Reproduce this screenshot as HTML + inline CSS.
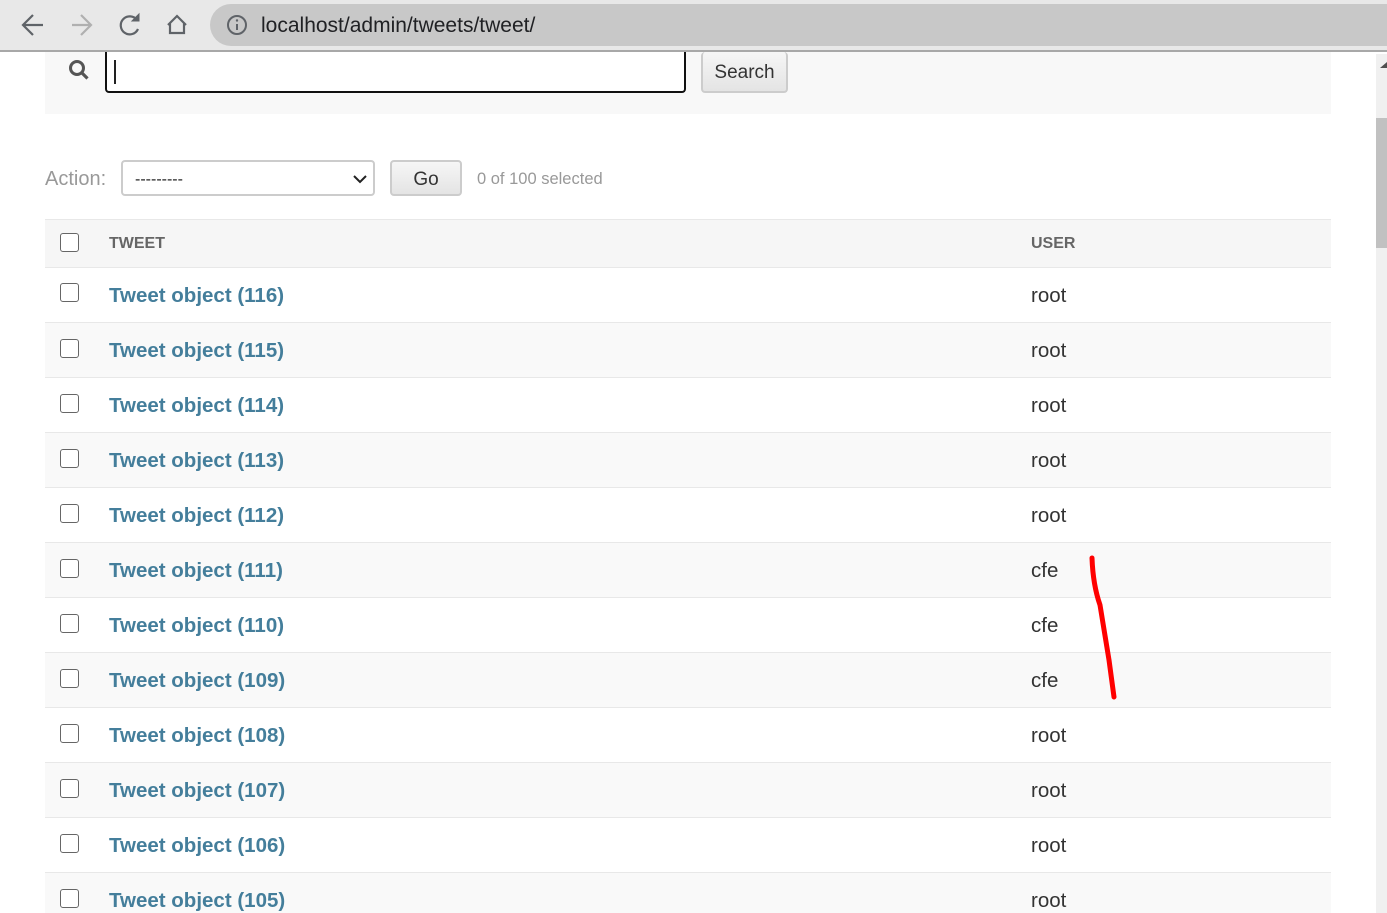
<!DOCTYPE html>
<html><head><meta charset="utf-8"><style>
*{box-sizing:border-box;margin:0;padding:0}
html,body{width:1387px;height:913px;overflow:hidden}
body{background:#fff;font-family:"Liberation Sans",Arial,sans-serif;position:relative}
.bar{position:absolute;left:0;top:0;width:1387px;height:52px;background:#e8e8e8;border-bottom:2px solid #a8a8a8}
.pill{position:absolute;left:210px;top:4px;width:1200px;height:42px;border-radius:21px;background:#c8c8c8}
.url{position:absolute;left:261px;top:14px;font-size:21px;color:#202124}
.sbar{position:absolute;left:45px;top:52px;width:1286px;height:62px;background:#f8f8f8}
.inp{position:absolute;left:105px;top:52px;width:581px;height:41px;border:2px solid #111;border-top:none;border-radius:0 0 4px 4px;background:#fff}
.caret{position:absolute;left:114px;top:60px;width:2px;height:24px;background:#222}
.btn{position:absolute;background:linear-gradient(#f6f6f6,#e4e4e4);border:2px solid #ccc;border-radius:4px;color:#333;font-size:19px;text-align:center}
.act{position:absolute;left:45px;top:168px;font-size:20px;color:#999}
.sel{position:absolute;left:121px;top:160px;width:254px;height:36px;border:2px solid #ccc;border-radius:4px;background:#fff;font-size:16px;padding:9px 12px;color:#222}
.cnt{position:absolute;left:477px;top:170px;font-size:16.5px;color:#999}
.row{position:absolute;left:45px;width:1286px;height:55px;border-top:1px solid #e8e8e8}
.cb{position:absolute;left:15px;width:19px;height:19px;border:1.5px solid #666;border-radius:3px;background:#fff}
.lnk{position:absolute;left:64px;top:16px;font-size:20.5px;font-weight:bold;color:#447e9b}
.usr{position:absolute;left:986px;top:16px;font-size:20.5px;color:#333}
.scroll{position:absolute;left:1376px;top:54px;width:11px;height:859px;background:#f0f0f0}
</style></head><body>
<div class="bar">
<svg width="210" height="52" style="position:absolute;left:0;top:0" fill="none" stroke-width="2.2">
<path d="M43 25H24M33 15l-10 10 10 10" stroke="#5f6368"/>
<path d="M72 25H91M81 15l10 10-10 10" stroke="#b0b0b0"/>
<path d="M137 20a9 9 0 1 0 1 9" stroke="#5f6368"/><path d="M139 14v7h-7z" fill="#5f6368" stroke="#5f6368" stroke-width="1"/>
<path d="M168 25l9-9 9 9M170 23v10h14V23" stroke="#5f6368"/>
</svg>
<div class="pill"></div>
<svg width="24" height="24" style="position:absolute;left:226px;top:14px" fill="none"><circle cx="11" cy="11" r="9" stroke="#5f6368" stroke-width="2"/><path d="M11 10v6" stroke="#5f6368" stroke-width="2"/><circle cx="11" cy="6.5" r="1.2" fill="#5f6368"/></svg>
<div class="url">localhost/admin/tweets/tweet/</div>
</div>
<div class="sbar"></div>
<svg width="24" height="24" style="position:absolute;left:68px;top:59px" fill="none"><circle cx="9" cy="9" r="6.5" stroke="#555" stroke-width="3"/><path d="M13.5 13.5l6 6" stroke="#555" stroke-width="3.2"/></svg>
<div class="inp"></div><div class="caret"></div>
<div class="btn" style="left:701px;top:52px;width:87px;height:41px;border-top:none;padding-top:10px">Search</div>
<div class="act">Action:</div>
<div class="sel">---------<svg width="14" height="10" style="position:absolute;right:6px;top:12px" fill="none"><path d="M1 2l6 6 6-6" stroke="#222" stroke-width="2"/></svg></div>
<div class="btn" style="left:390px;top:160px;width:72px;height:36px;padding-top:7px">Go</div>
<div class="cnt">0 of 100 selected</div>
<div class="row" style="top:219px;height:49px;background:#f6f6f6;border-bottom:1px solid #e8e8e8"><div class="cb" style="top:13px"></div><div style="position:absolute;left:64px;top:15px;font-size:16px;font-weight:bold;color:#666">TWEET</div><div style="position:absolute;left:986px;top:15px;font-size:16px;font-weight:bold;color:#666">USER</div></div>
<div class="row" style="top:268px;border-top:none"><div class="cb" style="top:15px"></div><div class="lnk">Tweet object (116)</div><div class="usr">root</div></div>
<div class="row" style="top:322px;background:#f9f9f9"><div class="cb" style="top:16px"></div><div class="lnk">Tweet object (115)</div><div class="usr">root</div></div>
<div class="row" style="top:377px"><div class="cb" style="top:16px"></div><div class="lnk">Tweet object (114)</div><div class="usr">root</div></div>
<div class="row" style="top:432px;background:#f9f9f9"><div class="cb" style="top:16px"></div><div class="lnk">Tweet object (113)</div><div class="usr">root</div></div>
<div class="row" style="top:487px"><div class="cb" style="top:16px"></div><div class="lnk">Tweet object (112)</div><div class="usr">root</div></div>
<div class="row" style="top:542px;background:#f9f9f9"><div class="cb" style="top:16px"></div><div class="lnk">Tweet object (111)</div><div class="usr">cfe</div></div>
<div class="row" style="top:597px"><div class="cb" style="top:16px"></div><div class="lnk">Tweet object (110)</div><div class="usr">cfe</div></div>
<div class="row" style="top:652px;background:#f9f9f9"><div class="cb" style="top:16px"></div><div class="lnk">Tweet object (109)</div><div class="usr">cfe</div></div>
<div class="row" style="top:707px"><div class="cb" style="top:16px"></div><div class="lnk">Tweet object (108)</div><div class="usr">root</div></div>
<div class="row" style="top:762px;background:#f9f9f9"><div class="cb" style="top:16px"></div><div class="lnk">Tweet object (107)</div><div class="usr">root</div></div>
<div class="row" style="top:817px"><div class="cb" style="top:16px"></div><div class="lnk">Tweet object (106)</div><div class="usr">root</div></div>
<div class="row" style="top:872px;height:41px;background:#f9f9f9"><div class="cb" style="top:16px"></div><div class="lnk">Tweet object (105)</div><div class="usr">root</div></div>
<svg width="1387" height="913" style="position:absolute;left:0;top:0;pointer-events:none" fill="none"><path d="M1092 558 Q1093 585 1100 605 L1109 660 L1114 697" stroke="#f00" stroke-width="5" stroke-linecap="round" stroke-linejoin="round"/></svg>
<div class="scroll"><div style="position:absolute;left:0;top:64px;width:11px;height:130px;background:#c1c1c1"></div><svg width="11" height="10" style="position:absolute;top:6px;left:0"><path d="M4 8h7V2z" fill="#505050"/></svg></div>
</body></html>
